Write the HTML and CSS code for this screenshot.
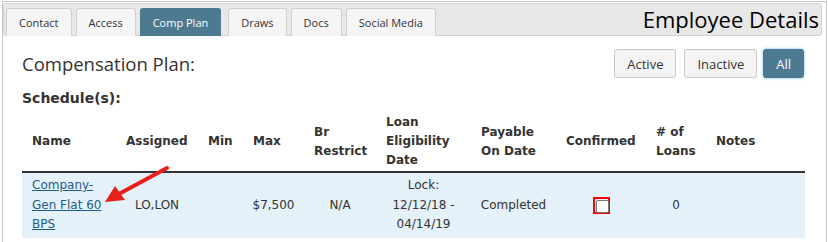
FILE: index.html
```html
<!DOCTYPE html>
<html lang="en">
<head>
    <meta charset="UTF-8">
    <title>Employee Details</title>
    <link rel="stylesheet" href="styles.css">
</head>
<body>
    <div class="panel">
        <div class="tab-bar">
            <ul class="tabs">
                <li class="tab">Contact</li>
                <li class="tab">Access</li>
                <li class="tab active">Comp Plan</li>
                <li class="tab">Draws</li>
                <li class="tab">Docs</li>
                <li class="tab">Social Media</li>
            </ul>
            <div class="panel-title">Employee Details</div>
        </div>
        <div class="content">
            <div class="content-head">
                <h2>Compensation Plan:</h2>
                <div class="filters">
                    <button class="filter">Active</button>
                    <button class="filter">Inactive</button>
                    <button class="filter selected">All</button>
                </div>
            </div>
            <h3>Schedule(s):</h3>
            <div class="table-wrap">
                <table class="schedules">
                    <colgroup>
                        <col style="width: 94px">
                        <col style="width: 82px">
                        <col style="width: 45px">
                        <col style="width: 61px">
                        <col style="width: 72px">
                        <col style="width: 95px">
                        <col style="width: 85px">
                        <col style="width: 90px">
                        <col style="width: 60px">
                        <col>
                    </colgroup>
                    <thead>
                        <tr>
                            <th>Name</th>
                            <th>Assigned</th>
                            <th>Min</th>
                            <th>Max</th>
                            <th>Br<br>Restrict</th>
                            <th>Loan<br>Eligibility<br>Date</th>
                            <th>Payable<br>On Date</th>
                            <th>Confirmed</th>
                            <th># of<br>Loans</th>
                            <th>Notes</th>
                        </tr>
                    </thead>
                    <tbody>
                        <tr>
                            <td class="name"><a href="#">Company-<br>Gen Flat 60<br>BPS</a></td>
                            <td>LO,LON</td>
                            <td></td>
                            <td>$7,500</td>
                            <td>N/A</td>
                            <td>Lock:<br>12/12/18 -<br>04/14/19</td>
                            <td>Completed</td>
                            <td><span class="check-mark"><span class="checkbox"></span></span></td>
                            <td>0</td>
                            <td></td>
                        </tr>
                    </tbody>
                </table>
                <svg class="arrow" width="80" height="50" viewBox="0 0 80 50">
                    <line x1="64" y1="6" x2="14" y2="33" stroke="#e8201c" stroke-width="4" stroke-linecap="round"/>
                    <polygon points="2,40 12,24 22,38" fill="#e8201c"/>
                </svg>
            </div>
        </div>
    </div>
</body>
</html>
```

FILE: styles.css
```css
body {
    margin: 0;
    background: #fff;
    font-family: "DejaVu Sans", Verdana, sans-serif;
    color: #333;
}

.panel {
    margin: 1px 1px 0 2px;
    height: 241px;
    border: 1px solid #c6c6c6;
    border-bottom: none;
    box-sizing: border-box;
}

.tab-bar {
    display: flex;
    justify-content: space-between;
    align-items: flex-end;
    margin: 1px 4px 0 0;
    height: 33px;
    background: #e8e8e8;
    border: 1px solid #d3d3d3;
    border-radius: 3px;
    box-sizing: border-box;
}

.tabs {
    display: flex;
    list-style: none;
    margin: 0 0 -1px 2px;
    padding: 0;
    gap: 4px;
}

.tab {
    height: 28px;
    line-height: 28px;
    padding: 0 12px;
    background: #f5f5f5;
    border: 1px solid #d0d0d0;
    border-bottom: none;
    border-radius: 3px 3px 0 0;
    font-family: "Open Sans", sans-serif;
    font-size: 11px;
    color: #333;
    box-sizing: border-box;
}

.tab.active {
    background: #4d7a91;
    border-color: #4d7a91;
    color: #fff;
    margin-right: 3px;
}

.panel-title {
    font-family: "Open Sans", sans-serif;
    font-size: 22px;
    color: #000;
    padding: 0 2px 1px 0;
}

.content {
    padding: 0 22px 0 19px;
}

.content-head {
    display: flex;
    justify-content: space-between;
    align-items: flex-start;
    padding-top: 13px;
}

h2 {
    margin: 2px 0 0;
    font-family: "Open Sans", sans-serif;
    font-size: 18.5px;
    font-weight: normal;
    color: #333;
}

.filters {
    display: flex;
    gap: 8px;
}

.filter {
    height: 29px;
    padding: 0 12px;
    background: #f4f4f4;
    border: 1px solid #c9c9c9;
    border-radius: 3px;
    font-family: "Open Sans", sans-serif;
    font-size: 13px;
    color: #333;
}

.filter.selected {
    background: #4d7a91;
    border-color: #4d7a91;
    color: #fff;
    box-shadow: 0 0 3px rgba(102, 175, 233, 0.9);
    margin-left: -2px;
}

h3 {
    margin: 12px 0 0;
    font-size: 14px;
    font-weight: bold;
    color: #333;
}

.table-wrap {
    position: relative;
    margin-top: 6px;
}

.schedules {
    width: 783px;
    border-collapse: collapse;
    table-layout: fixed;
    font-size: 12px;
}

.schedules th {
    text-align: left;
    vertical-align: middle;
    padding: 1px 10px 1px 10px;
    line-height: 19px;
    font-weight: bold;
    border-bottom: 2px solid #333;
}

.schedules td {
    text-align: center;
    vertical-align: middle;
    padding: 3px 4px 3px;
    line-height: 19.5px;
    background: #e4f1f8;
}

.schedules td.name {
    text-align: left;
    padding-left: 10px;
}

.schedules a {
    color: #1e5c8c;
}

.check-mark {
    display: inline-block;
    vertical-align: middle;
    width: 17px;
    height: 17px;
    border: 2px solid #f00;
    box-sizing: border-box;
    padding: 1px;
}

.checkbox {
    display: block;
    width: 11px;
    height: 11px;
    border: 1px solid #777;
    border-radius: 2px;
    background: #fff;
}

.arrow {
    position: absolute;
    left: 81px;
    top: 50px;
}
```
